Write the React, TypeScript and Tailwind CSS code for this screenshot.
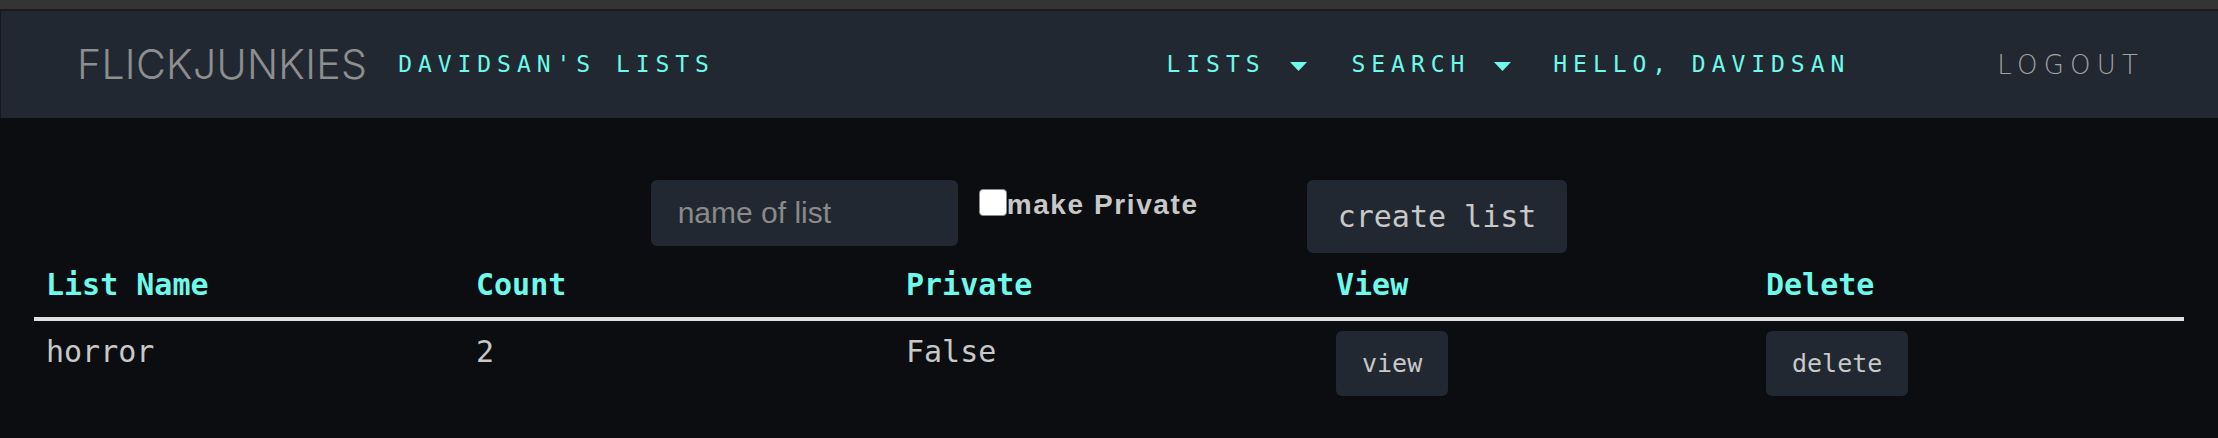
const teal = 'text-[#6ef9ea]'

function Caret() {
  return (
    <svg width="17" height="9" viewBox="0 0 17 9" className="mt-[4px] shrink-0">
      <polygon points="0,0 17,0 8.5,9" fill="#6ef9ea" />
    </svg>
  )
}

const rows = [{ name: 'horror', count: 2, priv: 'False' }]

export default function App() {
  return (
    <div className="min-h-[438px] w-full bg-[#0b0d11] font-['DejaVu_Sans_Mono',monospace]">
      <div className="h-[9px] bg-[#343434]" />
      <div className="h-[2px] bg-[#1b1b1b]" />

      {/* top nav */}
      <nav className="flex h-[107px] items-center justify-between border-l border-[#15181c] bg-[#212831] pl-[76px] pr-[74px]">
        <div className="flex items-center">
          <span className="font-['Inter',sans-serif] text-[41px] font-light leading-none tracking-[0.3px] text-[#8e8e8e]">
            FLICKJUNKIES
          </span>
          <span className={`ml-[31px] text-[23px] leading-none tracking-[5.95px] ${teal}`}>DAVIDSAN'S LISTS</span>
        </div>
        <div className={`flex items-center text-[23px] leading-none tracking-[5.95px] ${teal}`}>
          <span>LISTS</span>
          <span className="ml-[25px]">
            <Caret />
          </span>
          <span className="ml-[44px]">SEARCH</span>
          <span className="ml-[24px]">
            <Caret />
          </span>
          <span className="ml-[42px]">HELLO, DAVIDSAN</span>
          <span className="ml-[147px] font-['DejaVu_Sans',sans-serif] text-[26px] font-extralight tracking-[6.2px] text-[#a2a2a2]">
            LOGOUT
          </span>
        </div>
      </nav>

      {/* new list form */}
      <div className="mt-[62px] flex items-start justify-center">
        <input
          type="text"
          placeholder="name of list"
          className="h-[66px] w-[307px] rounded-[6px] bg-[#212831] pl-[27px] font-['Liberation_Sans',Arial,sans-serif] text-[30px] text-[#c8c8c8] outline-none placeholder:text-[#8a8a8a]"
        />
        <label className="ml-[21px] mt-[9px] flex items-start">
          <input
            type="checkbox"
            className="h-[27px] w-[28px] appearance-none rounded-[4px] border border-[#8a8a8a] bg-white"
          />
          <span className="font-['Liberation_Sans',Arial,sans-serif] text-[28px] font-bold leading-[1.15] tracking-[1.6px] text-[#c8c8c8]">
            make Private
          </span>
        </label>
        <button className="ml-[108px] rounded-[6px] bg-[#212831] px-[31px] py-[19px] text-[30px] leading-[35px] text-[#c8c8c8]">
          create list
        </button>
      </div>

      {/* lists table */}
      <table className="mx-auto mt-[4px] w-[2150px] table-fixed border-collapse text-left">
        <thead>
          <tr className="border-b-4 border-[#e0e0e0]">
            {['List Name', 'Count', 'Private', 'View', 'Delete'].map((h) => (
              <th key={h} className={`px-[12px] pb-[15px] pt-[10px] text-[30px] font-bold leading-[35px] ${teal}`}>
                {h}
              </th>
            ))}
          </tr>
        </thead>
        <tbody className="text-[30px] leading-[35px] text-[#c8c8c8]">
          {rows.map((r) => (
            <tr key={r.name}>
              <td className="px-[12px] pt-[13px] align-top">{r.name}</td>
              <td className="px-[12px] pt-[13px] align-top">{r.count}</td>
              <td className="px-[12px] pt-[13px] align-top">{r.priv}</td>
              <td className="px-[12px] pt-[10px] align-top">
                <button className="rounded-[6px] bg-[#212831] px-[26px] py-[18px] text-[25px] leading-[29px] text-[#c8c8c8]">
                  view
                </button>
              </td>
              <td className="px-[12px] pt-[10px] align-top">
                <button className="rounded-[6px] bg-[#212831] px-[26px] py-[18px] text-[25px] leading-[29px] text-[#c8c8c8]">
                  delete
                </button>
              </td>
            </tr>
          ))}
        </tbody>
      </table>
    </div>
  )
}
